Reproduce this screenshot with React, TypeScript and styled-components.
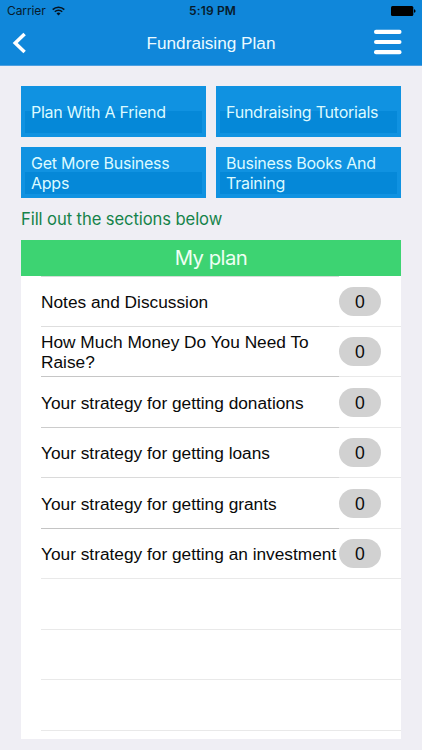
import React from "react";
import styled, { createGlobalStyle } from "styled-components";

const GlobalStyle = createGlobalStyle`
  * { box-sizing: border-box; }
  body { margin: 0; background: #efeef4; }
`;

const Screen = styled.div`
  width: 422px;
  height: 750px;
  overflow: hidden;
  display: flex;
  flex-direction: column;
  background: #efeef4;
  font-family: Inter, sans-serif;
`;

const Header = styled.header`
  height: 66px;
  flex: none;
  background: #1087da;
  border-bottom: 1px solid #4d9fe0;
`;

const StatusBar = styled.div`
  height: 22px;
  display: grid;
  grid-template-columns: 1fr auto 1fr;
  align-items: center;
  padding: 0 6px 0 7px;
  font-size: 12px;
  line-height: 22px;
  color: #071b2c;
`;

const Carrier = styled.div`
  display: flex;
  align-items: center;
  gap: 6px;
  letter-spacing: -0.1px;
`;

const Clock = styled.div`
  padding-left: 2px;
  font-weight: 600;
  font-size: 12px;
  letter-spacing: 0.15px;
`;

const BatterySlot = styled.div`
  display: flex;
  justify-content: flex-end;
`;

const NavBar = styled.nav`
  height: 43px;
  display: grid;
  grid-template-columns: 40px 1fr 40px;
  align-items: center;
  padding: 0 8px 0 8px;
`;

const IconButton = styled.button<{ $end?: boolean }>`
  display: flex;
  justify-content: ${(p) => (p.$end ? "flex-end" : "flex-start")};
  padding: ${(p) => (p.$end ? "0 0 3px" : "0 0 1px")};
  border: 0;
  background: none;
`;

const Title = styled.h1`
  margin: 0;
  padding-bottom: 1px;
  text-align: center;
  font: 400 17.2px/22px "Liberation Sans", Arial, sans-serif;
  color: #eafaff;
`;

const Content = styled.main`
  padding: 20px 21px 0;
`;

const Tiles = styled.div`
  display: grid;
  grid-template-columns: 185px 185px;
  grid-auto-rows: 51px;
  column-gap: 10px;
  row-gap: 10px;
`;

const Tile = styled.button`
  display: flex;
  align-items: center;
  padding: 0 10px;
  border: 0;
  text-align: left;
  font: 400 16px/20px Inter, sans-serif;
  letter-spacing: -0.24px;
  color: #dcfaff;
  background:
    linear-gradient(#0588d8, #0588d8) 4px 25px / 177px 22px no-repeat,
    #1092e1;
`;

const Hint = styled.p`
  margin: 0;
  height: 41.6px;
  font-size: 16.6px;
  line-height: 42px;
  letter-spacing: -0.09px;
  color: #16834a;
`;

const Panel = styled.section`
  height: 499.8px;
  overflow: hidden;
  background: #fff;
`;

const PanelTitle = styled.h2`
  margin: 0;
  height: 36.4px;
  text-align: center;
  font: 400 20.3px/36.4px Inter, sans-serif;
  letter-spacing: -0.5px;
  color: #effff4;
  background: #3dd372;
`;

const Rows = styled.ul`
  list-style: none;
  margin: 0;
  padding: 0 0 0 20px;

  &::before {
    content: "";
    display: block;
    width: 298px;
    height: 1px;
    margin-bottom: -0.5px;
    background: #d3dcd6;
  }
`;

const Row = styled.li`
  height: 50.47px;
  display: grid;
  grid-template-columns: 298px 1fr;
`;

const Label = styled.div<{ $line: string }>`
  display: flex;
  align-items: center;
  padding-top: 1px;
  border-bottom: 1px solid ${(p) => p.$line};
  font: 400 17.3px/20px "Liberation Sans", Arial, sans-serif;
  color: #0a0a0a;
`;

const LabelText = styled.span<{ $nowrap: boolean }>`
  white-space: ${(p) => (p.$nowrap ? "nowrap" : "normal")};
`;

const CountCell = styled.div`
  display: flex;
  align-items: center;
  padding-top: 0.5px;
  border-bottom: 1px solid #e9e9e9;
`;

const Count = styled.span`
  width: 42px;
  height: 29px;
  border-radius: 15px;
  background: #d1d1d1;
  text-align: center;
  font: 400 17.6px/30px "Liberation Sans", Arial, sans-serif;
  color: #0a0a0a;
`;

const tiles = [
  "Plan With A Friend",
  "Fundraising Tutorials",
  "Get More Business Apps",
  "Business Books And Training",
];

const sections = [
  { label: "Notes and Discussion", line: "#dedede" },
  { label: "How Much Money Do You Need To Raise?", line: "#c6c6c6", wrap: true },
  { label: "Your strategy for getting donations", line: "#cccccc" },
  { label: "Your strategy for getting loans", line: "#dadada" },
  { label: "Your strategy for getting grants", line: "#c4c4c4" },
  { label: "Your strategy for getting an investment", line: "#e9e9e9" },
];

const emptyRows = [0, 1, 2];

export default function App() {
  return (
    <Screen>
      <GlobalStyle />
      <Header>
        <StatusBar>
          <Carrier>
            Carrier
            <svg width="13" height="10" viewBox="0 0 13 10" fill="none" stroke="#06131f" strokeWidth="1.6">
              <path d="M0.7 3.6a8.3 8.3 0 0 1 11.6 0" />
              <path d="M2.8 5.8a5.3 5.3 0 0 1 7.4 0" />
              <path d="M6.5 9.6 4.5 7.5a2.9 2.9 0 0 1 4 0Z" fill="#06131f" stroke="none" />
            </svg>
          </Carrier>
          <Clock>5:19 PM</Clock>
          <BatterySlot>
            <svg width="25" height="10" viewBox="0 0 25 10" fill="#000">
              <rect x="0" y="0" width="22.3" height="10" rx="1.5" />
              <path d="M23 3.2c2 .4 2 3.2 0 3.6Z" />
            </svg>
          </BatterySlot>
        </StatusBar>
        <NavBar>
          <IconButton aria-label="Back">
            <svg width="22" height="24" viewBox="0 0 22 24" fill="none" stroke="#fff" strokeWidth="3.5">
              <path d="M16.6 2.9 7.2 12l9.4 9.1" />
            </svg>
          </IconButton>
          <Title>Fundraising Plan</Title>
          <IconButton $end aria-label="Menu">
            <svg width="40" height="26" viewBox="0 0 40 26" fill="#fff">
              <rect x="0" y="0.7" width="27.5" height="4.2" rx="2" />
              <rect x="0" y="10.9" width="27.5" height="4.2" rx="2" />
              <rect x="0" y="21" width="27.5" height="4.2" rx="2" />
            </svg>
          </IconButton>
        </NavBar>
      </Header>
      <Content>
        <Tiles>
          {tiles.map((t) => (
            <Tile key={t}>{t}</Tile>
          ))}
        </Tiles>
        <Hint>Fill out the sections below</Hint>
        <Panel>
          <PanelTitle>My plan</PanelTitle>
          <Rows>
            {sections.map((s) => (
              <Row key={s.label}>
                <Label $line={s.line}>
                  <LabelText $nowrap={!s.wrap}>{s.label}</LabelText>
                </Label>
                <CountCell>
                  <Count>0</Count>
                </CountCell>
              </Row>
            ))}
            {emptyRows.map((n) => (
              <Row key={n}>
                <Label $line="#e9e9e9" />
                <CountCell />
              </Row>
            ))}
          </Rows>
        </Panel>
      </Content>
    </Screen>
  );
}
